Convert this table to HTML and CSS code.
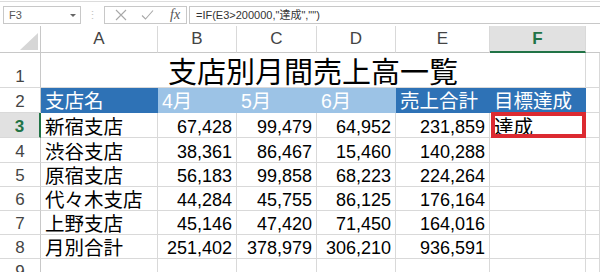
FILE: index.html
```html
<!DOCTYPE html>
<html lang="ja">
<head>
<meta charset="utf-8">
<title>支店別月間売上高一覧</title>
<link rel="stylesheet" href="styles.css">
</head>
<body>
<div class="fbar">
  <div class="namebox"><span>F3</span><span class="dd"></span></div>
  <div class="dots">⋮</div>
  <div class="btns">
    <svg class="ico ico-x" width="12" height="12" viewBox="0 0 12 12"><path d="M1 1L11 11M11 1L1 11" stroke="#a8a8a8" stroke-width="1.1" fill="none"/></svg>
    <svg class="ico ico-ok" width="13" height="12" viewBox="0 0 13 12"><path d="M1 6.5L4.5 10L12 1.5" stroke="#a8a8a8" stroke-width="1.1" fill="none"/></svg>
    <span class="fx">fx</span>
  </div>
  <div class="formula">=IF(E3&gt;200000,"達成","")</div>
</div>
<div class="sheet">
  <div class="c corner"><svg width="20" height="18" viewBox="0 0 20 18"><path d="M19 0V17H1Z" fill="#d6d6d6"/></svg></div>
  <div class="c ch">A</div>
  <div class="c ch">B</div>
  <div class="c ch">C</div>
  <div class="c ch">D</div>
  <div class="c ch">E</div>
  <div class="c ch sel">F</div>
  <div class="c ch last"></div>

  <div class="c rh">1</div>
  <div class="c title">支店別月間売上高一覧</div>
  <div class="c"></div>

  <div class="c rh">2</div>
  <div class="c hd dark">支店名</div>
  <div class="c hd light">4月</div>
  <div class="c hd light">5月</div>
  <div class="c hd light">6月</div>
  <div class="c hd dark">売上合計</div>
  <div class="c hd dark">目標達成</div>
  <div class="c"></div>

  <div class="c rh rsel">3</div>
  <div class="c tx">新宿支店</div>
  <div class="c nm">67,428</div>
  <div class="c nm">99,479</div>
  <div class="c nm">64,952</div>
  <div class="c nm">231,859</div>
  <div class="c tx active">達成<span class="redbox"></span></div>
  <div class="c"></div>

  <div class="c rh">4</div>
  <div class="c tx">渋谷支店</div>
  <div class="c nm">38,361</div>
  <div class="c nm">86,467</div>
  <div class="c nm">15,460</div>
  <div class="c nm">140,288</div>
  <div class="c"></div>
  <div class="c"></div>

  <div class="c rh">5</div>
  <div class="c tx">原宿支店</div>
  <div class="c nm">56,183</div>
  <div class="c nm">99,858</div>
  <div class="c nm">68,223</div>
  <div class="c nm">224,264</div>
  <div class="c"></div>
  <div class="c"></div>

  <div class="c rh">6</div>
  <div class="c tx">代々木支店</div>
  <div class="c nm">44,284</div>
  <div class="c nm">45,755</div>
  <div class="c nm">86,125</div>
  <div class="c nm">176,164</div>
  <div class="c"></div>
  <div class="c"></div>

  <div class="c rh">7</div>
  <div class="c tx">上野支店</div>
  <div class="c nm">45,146</div>
  <div class="c nm">47,420</div>
  <div class="c nm">71,450</div>
  <div class="c nm">164,016</div>
  <div class="c"></div>
  <div class="c"></div>

  <div class="c rh">8</div>
  <div class="c tx">月別合計</div>
  <div class="c nm">251,402</div>
  <div class="c nm">378,979</div>
  <div class="c nm">306,210</div>
  <div class="c nm">936,591</div>
  <div class="c"></div>
  <div class="c"></div>

  <div class="c rh">9</div>
  <div class="c"></div>
  <div class="c"></div>
  <div class="c"></div>
  <div class="c"></div>
  <div class="c"></div>
  <div class="c"></div>
  <div class="c"></div>
</div>
</body>
</html>
```
FILE: styles.css
```css
html, body {
  margin: 0;
  padding: 0;
}
body {
  width: 600px;
  height: 272px;
  overflow: hidden;
  background: #fff;
  font-family: "Liberation Sans", "Noto Sans CJK JP", sans-serif;
  color: #000;
}

/* formula bar */
.fbar {
  display: flex;
  align-items: flex-start;
  height: 25px;
  margin-top: 1px;
  box-sizing: border-box;
  border-top: 1px solid #dcdcdc;
  padding-top: 4px;
}
.namebox {
  width: 78px;
  height: 18px;
  margin-left: 3px;
  box-sizing: border-box;
  border: 1px solid #c8c8c8;
  display: flex;
  align-items: center;
  padding-left: 5px;
  font-size: 11px;
  color: #555;
}
.dd {
  margin-left: auto;
  margin-right: 4px;
  width: 0;
  height: 0;
  border-left: 3px solid transparent;
  border-right: 3px solid transparent;
  border-top: 3px solid #666;
}
.dots {
  width: 23px;
  height: 18px;
  display: flex;
  align-items: center;
  justify-content: center;
  font-size: 11px;
  color: #c4c4c4;
}
.btns {
  width: 83px;
  height: 18px;
  box-sizing: border-box;
  border: 1px solid #c8c8c8;
  display: flex;
  align-items: center;
}
.ico-x { margin-left: 10px; }
.ico-ok { margin-left: 14px; }
.fx {
  margin-left: 16px;
  font-family: "Liberation Serif", serif;
  font-style: italic;
  font-size: 14px;
  color: #555;
  line-height: 14px;
}
.formula {
  flex: 1;
  height: 18px;
  margin-left: 2px;
  box-sizing: border-box;
  border: 1px solid #c8c8c8;
  border-right: none;
  padding-left: 6px;
  font-size: 11px;
  line-height: 16px;
  color: #333;
  white-space: nowrap;
}

/* sheet */
.sheet {
  display: grid;
  grid-template-columns: 41px 117px 79px 80px 79px 94px 96px 1fr;
  grid-template-rows: 27px 35px 25px 25px 25px 24px 24px 24px 24px 24px;
}
.c {
  box-sizing: border-box;
  border-right: 1px solid #d9d9d9;
  border-bottom: 1px solid #d9d9d9;
  display: flex;
  align-items: flex-end;
  white-space: nowrap;
  overflow: visible;
}
.corner {
  align-items: flex-end;
  justify-content: flex-end;
  padding: 0 1px 1px 0;
  border-color: #c8c8c8;
}
.ch {
  align-items: center;
  justify-content: center;
  font-size: 17px;
  color: #444;
  border-bottom-color: #c8c8c8;
}
.ch.sel {
  background: #e1e1e1;
  color: #217346;
  font-weight: bold;
  border-bottom: 2px solid #217346;
}
.ch.last {
  border-right: none;
}
.rh {
  justify-content: center;
  font-size: 17px;
  line-height: 17px;
  padding-bottom: 2px;
  color: #444;
  border-right-color: #c8c8c8;
}
.rh.rsel {
  background: #e1e1e1;
  color: #217346;
  font-weight: bold;
  border-right: 2px solid #217346;
}
.title {
  grid-column: 2 / 8;
  justify-content: center;
  font-size: 29px;
  line-height: 28px;
}
.hd {
  font-size: 19.5px;
  line-height: 20px;
  color: #fff;
  padding-left: 4px;
  padding-bottom: 1px;
}
.hd.dark {
  background: #2e72b6;
  border-color: #2e72b6;
}
.hd.light {
  background: #9cc3e6;
  border-color: #9cc3e6;
}
.tx {
  font-size: 19.5px;
  line-height: 20px;
  padding-left: 4px;
}
.nm {
  justify-content: flex-end;
  font-size: 18px;
  line-height: 20px;
  padding-right: 4px;
}
.active {
  position: relative;
}
.redbox {
  position: absolute;
  left: 1px;
  right: -1px;
  top: -1px;
  bottom: -1px;
  border: 4px solid #dc2a31;
}
```
